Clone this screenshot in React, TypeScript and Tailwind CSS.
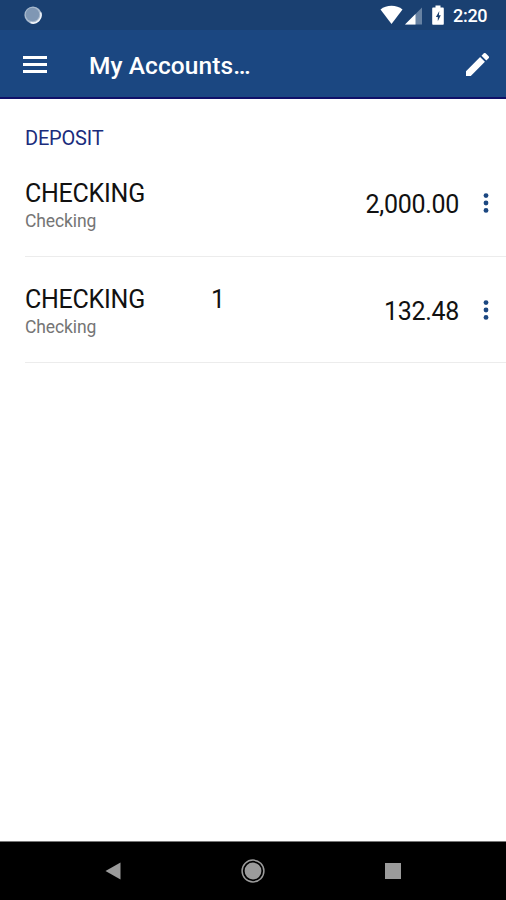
const accounts = [
  { name: "CHECKING", suffix: "", type: "Checking", balance: "2,000.00" },
  { name: "CHECKING", suffix: "1", type: "Checking", balance: "132.48" },
];

function StatusBar() {
  return (
    <div className="flex h-[30px] items-center bg-[#1a4071] pl-6 pr-[19px]">
      <svg width="18" height="18" viewBox="0 0 18 18">
        <circle cx="9" cy="9" r="8.6" fill="#a9bace" />
        <path d="M16.6 6.5A8 8 0 0 1 6.5 16.600" fill="none" stroke="#f1f5fa" strokeWidth="1.6" />
        <circle cx="8.5" cy="8.5" r="6.8" fill="#7f97b4" />
      </svg>
      <div className="grow"></div>
      <svg width="64" height="22" viewBox="0 0 64 22" className="mr-[9px]">
        <path d="M0.500 5.600C3.500 3 7.300 1.800 11.500 1.800s8 1.200 11 3.800L11.500 20z" fill="#fff" />
        <path d="M25 20.500L42 3.500v17z" fill="#6782a3" />
        <path d="M25 20.500L35.500 10v10.500z" fill="#fff" />
        <path
          d="M55.500 1.500h5v2h2.200c.7 0 1.100.4 1.100 1.100v15.100c0 .7-.4 1.100-1.100 1.100h-9.400c-.7 0-1.100-.4-1.100-1.100V4.600c0-.7.4-1.100 1.100-1.100h2.200z"
          fill="#fff"
        />
        <path d="M59.300 7l-3.400 5.900h1.900v4.300l3-5.900h-1.900z" fill="#1a4071" />
      </svg>
      <span className="w-[34px] whitespace-nowrap pt-[2px] text-[18px] font-medium leading-none tracking-[-0.3px] text-white">
        2:20
      </span>
    </div>
  );
}

function Header() {
  return (
    <header className="flex h-[69px] items-center border-b-2 border-[#101068] bg-[#1b4781] pl-[23px] pr-[17px] text-white">
      <button className="mt-px flex h-[17px] w-6 flex-col justify-between" aria-label="Menu">
        <span className="h-[3px] w-full bg-white"></span>
        <span className="h-[3px] w-full bg-white"></span>
        <span className="h-[3px] w-full bg-white"></span>
      </button>
      <h1 className="ml-[42px] grow pt-1 text-[24.500px] font-medium leading-7 tracking-[0.08px]">
        My Accounts…
      </h1>
      <svg width="23" height="23" viewBox="3 3 18 18" fill="#fff" className="mt-px">
        <path d="M3 17.250V21h3.750L17.810 9.940l-3.750-3.750L3 17.250zM20.710 7.040a1 1 0 0 0 0-1.410l-2.340-2.340a1 1 0 0 0-1.410 0l-1.830 1.830 3.750 3.750 1.830-1.830z" />
      </svg>
    </header>
  );
}

function NavBar() {
  return (
    <nav className="flex h-[59px] items-center justify-between border-t border-[#777] bg-black px-[105px]">
      <svg width="16" height="18" viewBox="0 0 16 18">
        <path d="M0.500 9L15.500 0.500v17z" fill="#9b9b9b" />
      </svg>
      <svg width="24" height="24" viewBox="0 0 24 24">
        <circle cx="12" cy="12" r="10.900" fill="none" stroke="#9b9b9b" strokeWidth="1.500" />
        <circle cx="12" cy="12" r="8.400" fill="#9b9b9b" />
      </svg>
      <div className="h-4 w-4 bg-[#9b9b9b]"></div>
    </nav>
  );
}

export default function App() {
  return (
    <div className="flex h-[900px] w-full flex-col bg-white font-['Roboto',sans-serif]">
      <StatusBar />
      <Header />
      <main className="grow pl-[25px]">
        <h2 className="mt-[27px] text-[20px] leading-6 tracking-[-0.2px] text-[#1a2c7c]">DEPOSIT</h2>
        {accounts.map((account, i) => (
          <div
            key={i}
            className="flex h-[106.500px] items-center border-b border-[#ececec] pr-[17px] text-[#111]"
          >
            <div className="grow pt-[6px]">
              <div className="flex text-[25px] leading-[30px]">
                <span className="w-[186px] tracking-[-0.25px]">{account.name}</span>
                <span>{account.suffix}</span>
              </div>
              <div className="text-[17.500px] leading-6 tracking-[-0.1px] text-[#757575]">{account.type}</div>
            </div>
            <span className="pt-[5px] text-[25px] leading-[30px] tracking-[-0.3px]">{account.balance}</span>
            <svg width="6" height="20" viewBox="0 0 6 20" fill="#1b4781" className="ml-6 mt-px">
              <circle cx="3" cy="2.600" r="2.400" />
              <circle cx="3" cy="10" r="2.400" />
              <circle cx="3" cy="17.400" r="2.400" />
            </svg>
          </div>
        ))}
      </main>
      <NavBar />
    </div>
  );
}
